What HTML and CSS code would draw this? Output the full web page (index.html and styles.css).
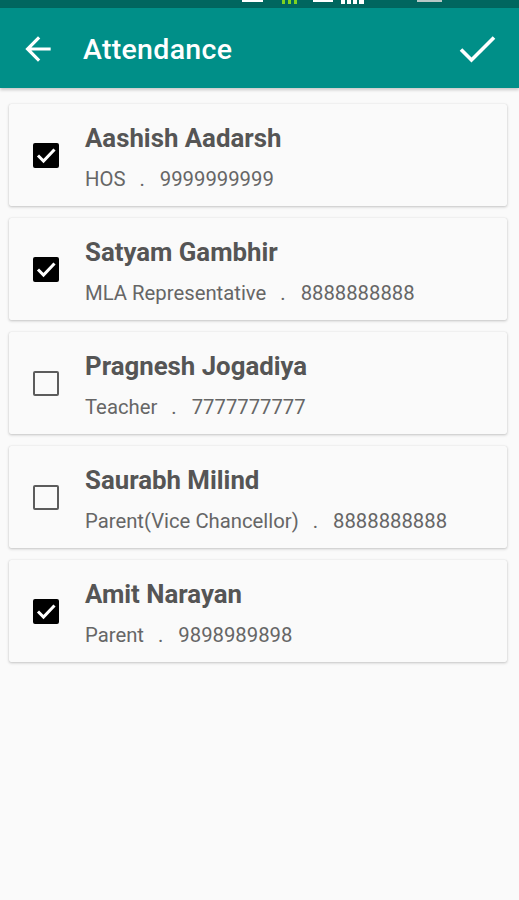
FILE: index.html
```html
<!DOCTYPE html>
<html>
<head>
<meta charset="utf-8">
<link rel="stylesheet" href="styles.css">
</head>
<body>
<div class="statusbar">
  <svg class="status-icons" width="519" height="8" viewBox="0 0 519 8">
    <rect x="242" y="0" width="21" height="2" fill="#ffffff"/>
    <rect x="282" y="0" width="3" height="4" fill="#7ed321"/>
    <rect x="288" y="0" width="3" height="4" fill="#7ed321"/>
    <rect x="294" y="0" width="3" height="4" fill="#7ed321"/>
    <rect x="313" y="0" width="20" height="2" fill="#ffffff"/>
    <rect x="341" y="0" width="4" height="4" fill="#ffffff"/>
    <rect x="347" y="0" width="4" height="4" fill="#ffffff"/>
    <rect x="353" y="0" width="4" height="4" fill="#ffffff"/>
    <rect x="359" y="0" width="5" height="4" fill="#ffffff"/>
    <rect x="417" y="0" width="25" height="2" fill="#b8c8c6"/>
  </svg>
</div>
<header class="toolbar">
  <svg class="back" width="38" height="38" viewBox="0 0 24 24"><path fill="#ffffff" d="M20 11H7.83l5.59-5.59L12 4l-8 8 8 8 1.41-1.41L7.83 13H20v-2z"/></svg>
  <h1 class="title">Attendance</h1>
  <svg class="done" width="38" height="30" viewBox="0 0 38 30"><path d="M2 14.5 L12.5 25 L35 2.5" fill="none" stroke="#ffffff" stroke-width="3.6"/></svg>
</header>
<main class="list">
  <div class="card">
    <div class="check-col"><span class="box checked"><svg width="26" height="25" viewBox="0 0 26 25"><path d="M5 13.5 L10.5 19 L21.5 7.5" fill="none" stroke="#fff" stroke-width="3"/></svg></span></div>
    <div class="info"><div class="name">Aashish Aadarsh</div><div class="sub"><span>HOS</span><span class="dot">.</span><span>9999999999</span></div></div>
  </div>
  <div class="card">
    <div class="check-col"><span class="box checked"><svg width="26" height="25" viewBox="0 0 26 25"><path d="M5 13.5 L10.5 19 L21.5 7.5" fill="none" stroke="#fff" stroke-width="3"/></svg></span></div>
    <div class="info"><div class="name">Satyam Gambhir</div><div class="sub"><span>MLA Representative</span><span class="dot">.</span><span>8888888888</span></div></div>
  </div>
  <div class="card">
    <div class="check-col"><span class="box"></span></div>
    <div class="info"><div class="name">Pragnesh Jogadiya</div><div class="sub"><span>Teacher</span><span class="dot">.</span><span>7777777777</span></div></div>
  </div>
  <div class="card">
    <div class="check-col"><span class="box"></span></div>
    <div class="info"><div class="name">Saurabh Milind</div><div class="sub"><span>Parent(Vice Chancellor)</span><span class="dot">.</span><span>8888888888</span></div></div>
  </div>
  <div class="card">
    <div class="check-col"><span class="box checked"><svg width="26" height="25" viewBox="0 0 26 25"><path d="M5 13.5 L10.5 19 L21.5 7.5" fill="none" stroke="#fff" stroke-width="3"/></svg></span></div>
    <div class="info"><div class="name">Amit Narayan</div><div class="sub"><span>Parent</span><span class="dot">.</span><span>9898989898</span></div></div>
  </div>
</main>
</body>
</html>
```

FILE: styles.css
```css
html, body {
  margin: 0;
  padding: 0;
  background: #fafafa;
  font-family: Roboto, "Liberation Sans", sans-serif;
}
.statusbar {
  height: 8px;
  background: #00665f;
}
.status-icons {
  display: block;
}
.toolbar {
  height: 80px;
  background: #008f88;
  display: flex;
  align-items: center;
  box-shadow: 0 2px 3px rgba(0, 0, 0, 0.2);
  position: relative;
}
.back {
  margin-left: 19px;
  margin-top: 1px;
}
.title {
  margin: 2px 0 0 26px;
  color: #ffffff;
  font-size: 28.5px;
  font-weight: 500;
  letter-spacing: 0.3px;
  flex: 1;
}
.done {
  margin-right: 22px;
  margin-top: 4px;
}
.list {
  padding: 16px 12px 16px 9px;
  display: flex;
  flex-direction: column;
  gap: 12px;
}
.card {
  height: 102px;
  box-sizing: border-box;
  background: #fafafa;
  border-radius: 2px;
  box-shadow: 0 1px 3px rgba(0, 0, 0, 0.22), 0 0 1px rgba(0, 0, 0, 0.12);
  display: flex;
  align-items: center;
}
.check-col {
  width: 76px;
  display: flex;
  padding-left: 24px;
  box-sizing: border-box;
}
.box {
  width: 26px;
  height: 25px;
  box-sizing: border-box;
  border: 2.5px solid #5c5c5c;
  border-radius: 2px;
  display: block;
  position: relative;
}
.box.checked {
  background: #000;
  border-color: #000;
}
.box svg {
  display: block;
  margin: -2.5px;
}
.info {
  display: flex;
  flex-direction: column;
  gap: 14px;
  padding-top: 4px;
}
.name {
  font-size: 25.8px;
  line-height: 30px;
  font-weight: 700;
  color: #555555;
}
.sub {
  font-size: 20.3px;
  line-height: 24px;
  color: #666666;
  display: flex;
}
.dot {
  margin: 0 15px 0 14px;
}
```
